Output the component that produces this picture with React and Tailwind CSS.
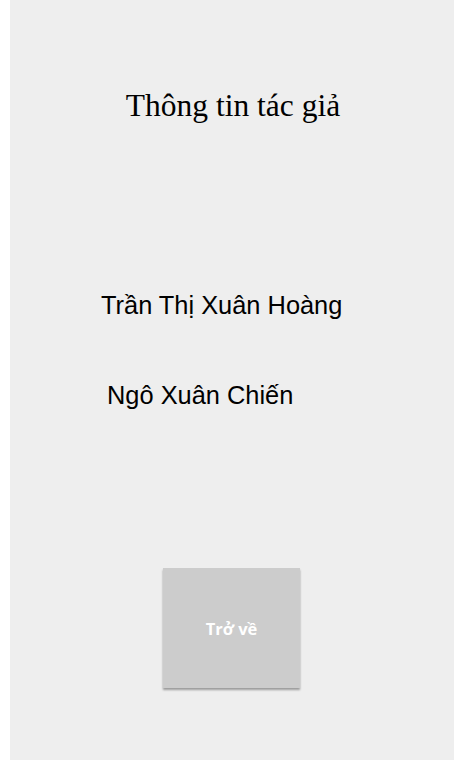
const App = () => {
  return (
    <div className="bg-white min-h-[769px] pl-[10px] pr-[6px]">
      <div className="bg-[#eeeeee] h-[760px] flex flex-col">
        <h1 className="mt-[90px] ml-[2px] text-center text-[31.5px] leading-none text-black font-['Liberation_Serif',serif]">
          Thông tin tác giả
        </h1>
        <p className="mt-[171px] ml-[91px] text-[25.4px] leading-none text-black font-['Liberation_Sans',Arial,sans-serif]">
          Trần Thị Xuân Hoàng
        </p>
        <p className="mt-[65px] ml-[97px] text-[25.4px] leading-none text-black font-['Liberation_Sans',Arial,sans-serif]">
          Ngô Xuân Chiến
        </p>
        <button
          type="button"
          className="mt-[160px] self-center ml-[-1px] w-[137px] h-[120px] pt-[2px] bg-[#cccccc] text-white font-bold text-[16.5px] font-['Open_Sans',sans-serif] shadow-[0_2px_2px_rgba(0,0,0,0.35)]"
        >
          Trở về
        </button>
      </div>
    </div>
  );
};

export default App;
